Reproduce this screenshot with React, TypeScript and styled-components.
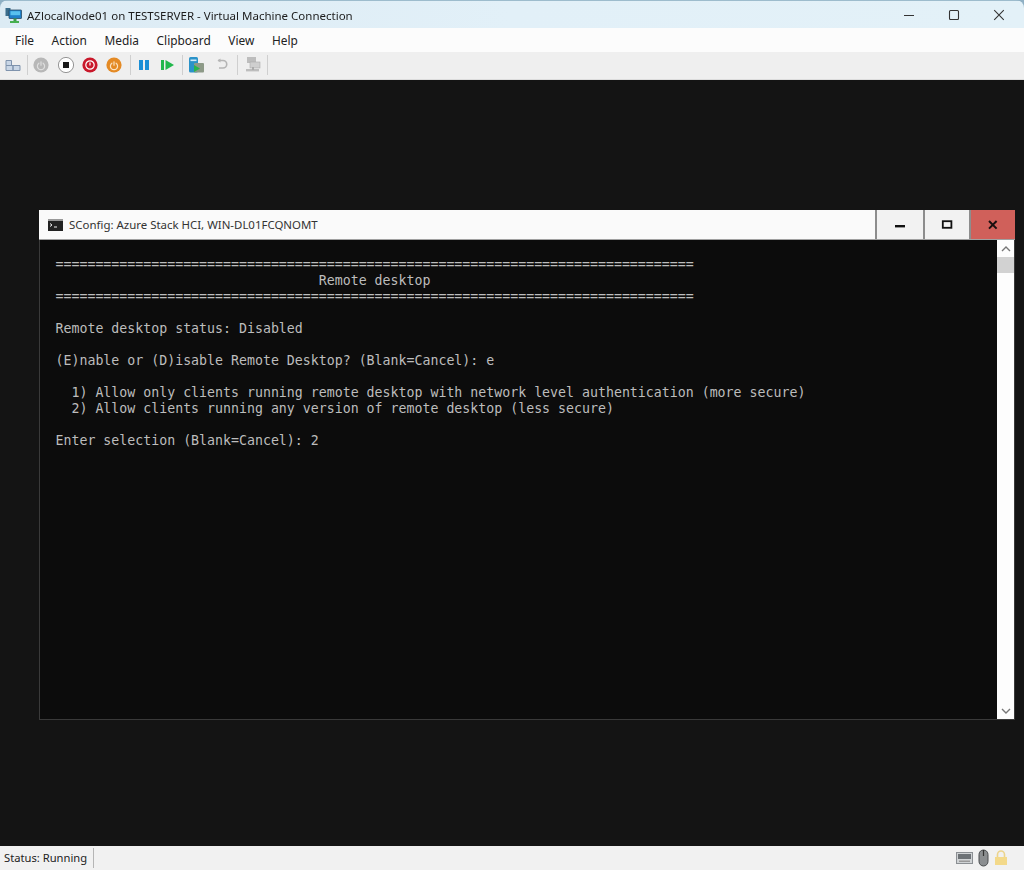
import React from 'react';
import styled, { createGlobalStyle } from 'styled-components';

const GlobalStyle = createGlobalStyle`
  html, body { margin: 0; padding: 0; background: #8fb0c4; }
  body { width: 1024px; height: 870px; overflow: hidden; font-family: "Noto Sans", "Liberation Sans", sans-serif; }
`;

const VmWindow = styled.div`
  width: 1024px;
  height: 870px;
  display: flex;
  flex-direction: column;
  box-sizing: border-box;
  border-radius: 8px 8px 0 0;
  overflow: hidden;
  filter: blur(0.35px);
`;

const TitleBar = styled.div`
  height: 28px;
  flex: none;
  display: flex;
  align-items: center;
  padding: 1px 3px 0 5px;
  box-sizing: border-box;
  background: linear-gradient(90deg, #dcebf4, #e2f0f8 50%, #e3f1f8);
  border-top: 1px solid #9dbccd;
  color: #1c1c1c;
  font-size: 11.5px;
`;

const TitleText = styled.span`
  margin-left: 5px;
  flex: 1;
`;

const CaptionButton = styled.div`
  width: 45px;
  height: 26px;
  display: flex;
  align-items: center;
  justify-content: center;
  color: #333;
`;

const MenuBar = styled.div`
  height: 24px;
  flex: none;
  display: flex;
  align-items: center;
  gap: 17.6px;
  padding-left: 15px;
  background: #fcfcfc;
  color: #222;
  font-size: 11.9px;
`;

const ToolBar = styled.div`
  height: 28px;
  flex: none;
  display: flex;
  align-items: center;
  padding: 0 0 1px 5px;
  background: #efefef;
  box-sizing: border-box;
  border-bottom: 1px solid #dcdcdc;
`;

const ToolSep = styled.div<{ $left: number; $right: number }>`
  width: 1px;
  height: 20px;
  flex: none;
  background: #cfcfcf;
  margin: 0 ${(p) => p.$right}px 0 ${(p) => p.$left}px;
`;

const ToolGap = styled.div<{ $w: number }>`
  width: ${(p) => p.$w}px;
  flex: none;
`;

const ToolIcon = styled.svg`
  flex: none;
  display: block;
`;

const Screen = styled.div`
  flex: 1;
  min-height: 0;
  background: #141414;
  padding: 130px 9px 126px 39px;
  display: flex;
  box-sizing: border-box;
`;

const Console = styled.div`
  flex: 1;
  display: flex;
  flex-direction: column;
  border: 1px solid #3a3a3a;
  border-top: none;
  background: #0c0c0c;
`;

const ConsoleTitle = styled.div`
  height: 30px;
  flex: none;
  display: flex;
  align-items: center;
  background: #fafafa;
  border-bottom: 1px solid #a0a0a0;
  box-sizing: border-box;
  padding-left: 9px;
  color: #333;
  font-size: 11.45px;
  margin: 0 -1px;
`;

const ConsoleTitleText = styled.span`
  margin-left: 6px;
  flex: 1;
`;

const ConsoleButton = styled.div<{ $close?: boolean; $w: number }>`
  width: ${(p) => p.$w}px;
  height: 29px;
  box-sizing: border-box;
  display: flex;
  align-items: center;
  justify-content: center;
  background: ${(p) => (p.$close ? '#d0605a' : '#f2f2f2')};
  border-left: 2px solid #8d8d8d;
`;

const ConsoleBody = styled.div`
  flex: 1;
  min-height: 0;
  display: flex;
`;

const Terminal = styled.pre`
  flex: 1;
  margin: 0;
  padding: 17px 0 0 15.5px;
  font-family: "DejaVu Sans Mono", "Liberation Mono", monospace;
  font-size: 13.25px;
  line-height: 16px;
  color: #bdbdbd;
`;

const ScrollBar = styled.div`
  width: 17px;
  flex: none;
  display: flex;
  flex-direction: column;
  background: #fdfdfd;
`;

const ScrollArrow = styled.div`
  height: 17px;
  flex: none;
  display: flex;
  align-items: center;
  justify-content: center;
`;

const ScrollThumb = styled.div`
  height: 16px;
  flex: none;
  background: #d2d2d2;
`;

const ScrollTrack = styled.div`
  flex: 1;
`;

const StatusBar = styled.div`
  height: 24px;
  flex: none;
  display: flex;
  align-items: center;
  padding: 0 16px 0 4px;
  background: #f1f1f1;
  color: #222;
  font-size: 11.2px;
`;

const StatusText = styled.span`
  padding-right: 6px;
  border-right: 1px solid #b5b5b5;
  line-height: 20px;
`;

const StatusSpacer = styled.div`
  flex: 1;
`;

const StatusIcons = styled.div`
  display: flex;
  align-items: center;
  gap: 5px;
`;

const menus = ['File', 'Action', 'Media', 'Clipboard', 'View', 'Help'];

const consoleText = `${'='.repeat(80)}
${' '.repeat(33)}Remote desktop
${'='.repeat(80)}

Remote desktop status: Disabled

(E)nable or (D)isable Remote Desktop? (Blank=Cancel): e

  1) Allow only clients running remote desktop with network level authentication (more secure)
  2) Allow clients running any version of remote desktop (less secure)

Enter selection (Blank=Cancel): 2`;

const VmIcon = () => (
  <ToolIcon width="17" height="17" viewBox="0 0 17 17">
    <rect x="0.5" y="1" width="5" height="8" fill="#3b6d8c" />
    <rect x="4" y="3" width="12.5" height="8.5" rx="0.5" fill="#1f80c8" stroke="#2b4c66" strokeWidth="0.8" />
    <rect x="5.5" y="4.2" width="9.5" height="4" fill="#58c0ee" />
    <rect x="8.5" y="11.5" width="3" height="2.5" fill="#3f9a4a" />
    <rect x="5" y="14" width="9" height="2" fill="#46b04f" />
  </ToolIcon>
);

const PowerGlyph = ({ color }: { color: string }) => (
  <g fill="none" stroke={color} strokeWidth="1.2" strokeLinecap="round">
    <path d="M5.9 6.2a3.6 3.6 0 1 0 4.2 0" />
    <path d="M8 4.8v3.4" />
  </g>
);

const RoundButton = ({ fill, children, stroke }: { fill: string; stroke?: string; children?: React.ReactNode }) => (
  <ToolIcon width="16" height="16" viewBox="0 0 16 16">
    <circle cx="8" cy="8" r="7.6" fill={fill} stroke={stroke ?? 'none'} strokeWidth="0.8" />
    {children}
  </ToolIcon>
);

export default function App() {
  return (
    <>
      <GlobalStyle />
      <VmWindow>
        <TitleBar>
          <VmIcon />
          <TitleText>AZlocalNode01 on TESTSERVER - Virtual Machine Connection</TitleText>
          <CaptionButton>
            <svg width="12" height="12" viewBox="0 0 12 12"><path d="M1 6.5h10" stroke="#333" strokeWidth="1.2" /></svg>
          </CaptionButton>
          <CaptionButton>
            <svg width="12" height="12" viewBox="0 0 12 12"><rect x="1.5" y="1.5" width="9" height="9" rx="1" fill="none" stroke="#333" strokeWidth="1.1" /></svg>
          </CaptionButton>
          <CaptionButton>
            <svg width="12" height="12" viewBox="0 0 12 12"><path d="M1.2 1.2l9.6 9.6M10.8 1.2l-9.6 9.6" stroke="#333" strokeWidth="1.1" /></svg>
          </CaptionButton>
        </TitleBar>
        <MenuBar>
          {menus.map((m) => <span key={m}>{m}</span>)}
        </MenuBar>
        <ToolBar>
          <ToolIcon width="16" height="16" viewBox="0 0 16 16">
            <path d="M1 3.5h5.5v5H1zM1 8.5h7v5H1zM8 8.5h7v5H8z" fill="#c9d6e6" stroke="#7f93ad" strokeWidth="1" />
          </ToolIcon>
          <ToolSep $left={6} $right={5} />
          <RoundButton fill="#b7b7b7"><PowerGlyph color="#dedede" /></RoundButton>
          <ToolGap $w={9} />
          <RoundButton fill="#ffffff" stroke="#7c7c7c"><rect x="5" y="5" width="6" height="6" fill="#1a1a1a" /></RoundButton>
          <ToolGap $w={8} />
          <RoundButton fill="#c9182b">
            <circle cx="8" cy="8" r="4.2" fill="none" stroke="#fff" strokeWidth="1.2" />
            <path d="M8 5.5v3" stroke="#fff" strokeWidth="1.2" />
          </RoundButton>
          <ToolGap $w={8} />
          <RoundButton fill="#e48a25"><PowerGlyph color="#fbe3c2" /></RoundButton>
          <ToolSep $left={8} $right={6} />
          <ToolIcon width="14" height="14" viewBox="0 0 14 14">
            <rect x="2" y="2" width="4" height="10" fill="#1b8fd6" />
            <rect x="8" y="2" width="4" height="10" fill="#1b8fd6" />
          </ToolIcon>
          <ToolGap $w={9} />
          <ToolIcon width="15" height="14" viewBox="0 0 15 14">
            <rect x="1" y="2" width="3" height="10" fill="#22b84c" />
            <path d="M5.5 2l8.5 5-8.5 5z" fill="#22b84c" />
          </ToolIcon>
          <ToolSep $left={7} $right={5} />
          <ToolIcon width="17" height="18" viewBox="0 0 17 18">
            <rect x="1" y="1" width="9" height="15.5" rx="1.5" fill="#2b93c9" />
            <rect x="2.5" y="3.5" width="6" height="1.6" fill="#d4ecf7" />
            <rect x="6" y="7" width="10" height="9.5" rx="1" fill="#8d9a88" />
            <path d="M6 9l6 3.5-6 3.5z" fill="#28b54d" />
          </ToolIcon>
          <ToolGap $w={10} />
          <ToolIcon width="14" height="14" viewBox="0 0 14 14">
            <path d="M3 2.5h5a3.6 3.6 0 0 1 0 7.5H4" fill="none" stroke="#b5b5b5" strokeWidth="1.6" />
            <path d="M5.5 0.5L2.5 2.5l3 2z" fill="#b5b5b5" />
          </ToolIcon>
          <ToolSep $left={8} $right={6} />
          <ToolIcon width="18" height="18" viewBox="0 0 18 18">
            <rect x="3" y="1" width="9" height="6" fill="#bdbdbd" />
            <rect x="6" y="6" width="10" height="6" fill="#cfcfcf" stroke="#aaa" strokeWidth="0.6" />
            <rect x="2" y="13" width="13" height="2.4" fill="#bdbdbd" />
            <rect x="8" y="11" width="2" height="3" fill="#aaa" />
          </ToolIcon>
          <ToolSep $left={5} $right={0} />
        </ToolBar>
        <Screen>
          <Console>
            <ConsoleTitle>
              <svg width="15" height="12" viewBox="0 0 15 12">
                <rect x="0" y="0" width="15" height="12" fill="#222" />
                <rect x="0" y="0" width="15" height="2" fill="#999" />
                <path d="M2 4.5l2 1.5-2 1.5M6 8h3" stroke="#eee" strokeWidth="1" fill="none" />
              </svg>
              <ConsoleTitleText>SConfig: Azure Stack HCI, WIN-DL01FCQNOMT</ConsoleTitleText>
              <ConsoleButton $w={48}>
                <svg width="12" height="12" viewBox="0 0 12 12"><rect x="1" y="6" width="10" height="2.4" fill="#111" /></svg>
              </ConsoleButton>
              <ConsoleButton $w={46}>
                <svg width="12" height="12" viewBox="0 0 12 12"><rect x="1.8" y="2.2" width="8.6" height="6.6" fill="none" stroke="#111" strokeWidth="1.8" /></svg>
              </ConsoleButton>
              <ConsoleButton $close $w={46}>
                <svg width="12" height="12" viewBox="0 0 12 12"><path d="M2 2l7.6 7.6M9.6 2L2 9.6" stroke="#1a0f0f" strokeWidth="2" /></svg>
              </ConsoleButton>
            </ConsoleTitle>
            <ConsoleBody>
              <Terminal>{consoleText}</Terminal>
              <ScrollBar>
                <ScrollArrow>
                  <svg width="10" height="8" viewBox="0 0 10 8"><path d="M1 6l4-4 4 4" fill="none" stroke="#777" strokeWidth="1.4" /></svg>
                </ScrollArrow>
                <ScrollThumb />
                <ScrollTrack />
                <ScrollArrow>
                  <svg width="10" height="8" viewBox="0 0 10 8"><path d="M1 2l4 4 4-4" fill="none" stroke="#777" strokeWidth="1.4" /></svg>
                </ScrollArrow>
              </ScrollBar>
            </ConsoleBody>
          </Console>
        </Screen>
        <StatusBar>
          <StatusText>Status: Running</StatusText>
          <StatusSpacer />
          <StatusIcons>
            <svg width="17" height="14" viewBox="0 0 17 14">
              <rect x="0.5" y="1.5" width="16" height="11" fill="#d0d3d5" stroke="#8b8f93" />
              <rect x="2" y="3" width="13" height="5" fill="#6d7276" />
              <rect x="3" y="9.5" width="11" height="1.5" fill="#999" />
            </svg>
            <svg width="11" height="18" viewBox="0 0 11 18">
              <rect x="1" y="1" width="9" height="16" rx="4.5" fill="#8b8e90" stroke="#4a4d4f" />
              <path d="M5.5 1v6" stroke="#333" strokeWidth="1.2" />
            </svg>
            <svg width="14" height="16" viewBox="0 0 14 16">
              <path d="M3.5 7V4.5a3.5 3.5 0 0 1 7 0V7" fill="none" stroke="#ecd48c" strokeWidth="1.6" />
              <rect x="1" y="7" width="12" height="8" fill="#f3d98a" />
            </svg>
          </StatusIcons>
        </StatusBar>
      </VmWindow>
    </>
  );
}
